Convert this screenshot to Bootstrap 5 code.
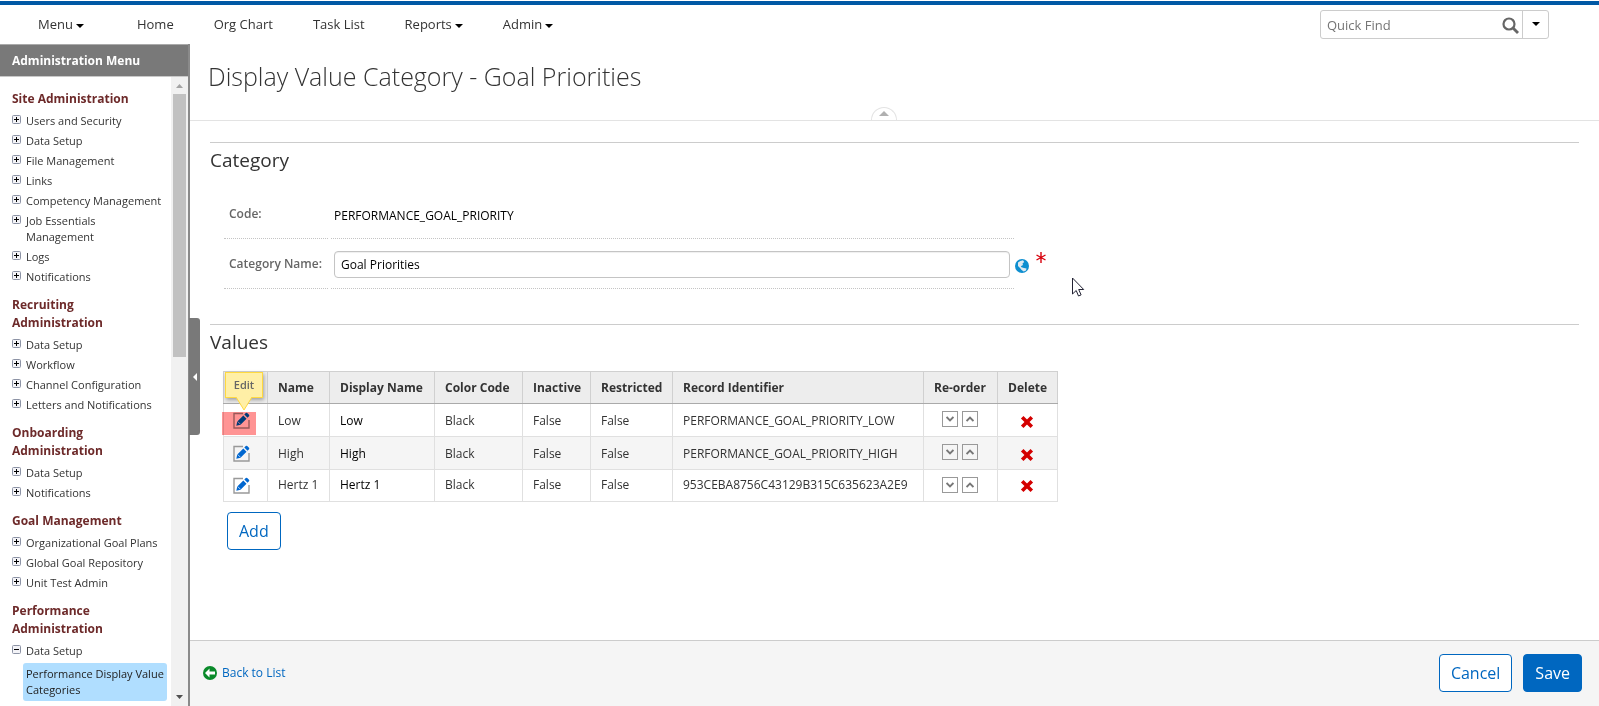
<!DOCTYPE html>
<html lang="en">
<head>
<meta charset="utf-8">
<meta name="viewport" content="width=device-width, initial-scale=1">
<title>Display Value Category - Goal Priorities</title>
<link href="https://cdn.jsdelivr.net/npm/bootstrap@5.3.0/dist/css/bootstrap.min.css" rel="stylesheet">
<style>
  body { font-family: "Open Sans", "Noto Sans", sans-serif; font-size: 12px; line-height: 16px; color: #333; background: #fff; }
  a { color: inherit; text-decoration: none; }
  .app { height: 100vh; }

  .topbar { height: 44px; padding: 5px 50px 0 38px; position: relative; }
  .topbar::before { content: ""; position: absolute; left: 0; right: 0; top: 1px; height: 4px; background: #0058a5; }
  .main-nav { gap: 40px; font-size: 13px; line-height: 18px; }
  .main-nav a:first-child { margin-right: 13px; }
  .main-nav a::after { color: #000; }
  .main-nav .dropdown-toggle::after { margin-left: 3px; border-width: 4px 4px 0; vertical-align: 1px; }
  .quick-find { width: 229px; height: 29px; border: 1px solid #ccc; border-radius: 3px; }
  .quick-find input { border: 0; padding: 2px 6px 0; font-size: 13px; outline: 0; min-width: 0; background: none; }
  .quick-find input::placeholder { color: #757575; opacity: 1; }
  .quick-find button { border: 0; background: none; padding: 0; }
  .quick-find .glass { margin-right: 3px; padding-top: 2px; }
  .quick-find .more { width: 26px; border-left: 1px solid #ccc; color: #000; padding-top: 2px; }
  .quick-find .more::after { margin: 0; border-width: 4px 4px 0; }

  .side { width: 190px; border-right: 2px solid #8a8a8a; position: relative; }
  .side-title { height: 33px; padding: 2px 0 0 12px; background: #797979; border-top: 1px solid #aaa; border-bottom: 1px solid #c8c8c8; color: #fff; font-size: 12px; font-weight: 700; margin: 0; }
  .side-list { padding: 13px 0 0 12px; overflow: hidden; font-size: 11px; }
  .side-list h2 { font-size: 12px; line-height: 18px; font-weight: 700; color: #6d2a2a; margin: 0 0 3px; }
  .side-list ul { margin: 0 0 9px; padding: 0; list-style: none; }
  .side-list li { padding: 2px 0; display: flex; gap: 5px; }
  .side-list li svg { flex: none; margin-top: 2px; }
  .side-list .current { margin: 2px 6px 0 11px; padding: 3px; border-radius: 3px; background: #b0deff; color: #222; }
  .scroller { width: 17px; flex: none; background: #f1f1f1; }
  .scroller .thumb { width: 13px; height: 263px; background: #c1c1c1; }
  .collapse-tab { position: absolute; left: 189px; top: 274px; width: 11px; height: 117px; padding: 0; border: 0; background: #797979; border-radius: 0 3px 3px 0; z-index: 2; }

  .page-head { height: 77px; border-bottom: 1px solid #e3e3e3; padding: 15px 0 0 18px; position: relative; }
  .page-head h1 { font-size: 25px; line-height: 34px; font-weight: 300; color: #333; margin: 0; }
  .fold { position: absolute; left: 50%; bottom: 0; margin-left: -24px; width: 26px; height: 13px; padding: 0; border: 1px solid #e3e3e3; border-bottom: 0; border-radius: 13px 13px 0 0; background: #fff; display: flex; justify-content: center; align-items: center; }

  .content { padding: 21px 20px 0; }
  .content section { border-top: 1px solid #ccc; padding-top: 5px; }
  .content section > h2 { font-size: 19px; line-height: 24px; font-weight: 400; margin: 0; }
  .details { width: 825px; margin: 22px 0 35px 14px; }
  .f-row { display: flex; gap: 3px; height: 50px; }
  .f-row > * { flex-shrink: 0; }
  .f-row:first-child { height: 45px; }
  .f-row:first-child > * { padding-top: 12px; }
  .f-row:first-child .f-value { padding-top: 14px; }
  .f-label { width: 104px; padding: 17px 0 0 5px; font-weight: 600; color: #666; border-bottom: 1px dotted #c4c4c4; }
  .f-value { width: 683px; border-bottom: 1px dotted #c4c4c4; padding: 0 0 0 3px; color: #000; }
  .f-field { padding: 12px 4px 0 3px; }
  .f-field input { width: 100%; height: 27px; border: 1px solid #c4c4c4; border-radius: 4px; padding: 0 6px; box-shadow: inset 0 1px 1px #0001; outline: 0; color: #000; }
  .f-mark { display: flex; padding-top: 12px; margin-left: -2px; }
  .f-mark button { border: 0; background: none; padding: 0; height: 14px; margin-top: 8px; display: flex; }

  .values { width: 834px; table-layout: fixed; border-collapse: collapse; margin: 17px 0 10px 13px; }
  .values th, .values td { border: 1px solid #e0e0e0; padding: 2px 10px 0; height: 33px; white-space: nowrap; }
  .values tbody tr:last-child td { height: 32px; padding-top: 0; }
  .values thead th { background: #ededed; border-color: #d0d0d0; border-bottom-color: #aaa; height: 32px; font-weight: 700; }
  .values tbody tr:nth-child(2) { background: #f5f5f5; }
  .values td:nth-child(3) { color: #000; }
  .values td.order-cell { padding: 0 8px 2px; }
  .values td:last-child { padding: 2px 10px 0 8px; }
  .values button { border: 0; background: none; padding: 0; line-height: 0; }
  .values .order { border: 1px solid #999; width: 16px; height: 16px; margin-right: 1px; display: inline-flex; align-items: center; justify-content: center; }
  .values td:first-child { padding-left: 9px; }
  .edit-cell { position: relative; }
  .edit-glow { position: absolute; left: -2px; top: 8px; width: 34px; height: 23px; background: #ff9494; mix-blend-mode: multiply; pointer-events: none; }
  .edit-tip { position: absolute; left: 1px; top: -32px; width: 38px; height: 26px; background: #ffefa6; border: 1px solid #ffd940; box-shadow: 1px 2px 4px #0005; font-size: 11px; font-weight: 600; line-height: 24px; text-align: center; color: #666; }
  .edit-tip svg { position: absolute; left: 9px; top: 23px; }

  .btn-line, .btn-fill { font-size: 16px; line-height: 22px; padding: 7px 11px; border-radius: 4px; --bs-btn-border-color: #0067c0; }
  .btn-line { --bs-btn-color: #0067c0; --bs-btn-bg: #fff; }
  .btn-fill { --bs-btn-color: #fff; --bs-btn-bg: #0067c0; }
  .add-row { padding-left: 17px; }
  .foot { height: 66px; background: #f5f5f5; border-top: 1px solid #ccc; padding: 0 17px 2px 13px; }
  .foot a { color: #0067c0; gap: 5px; }
  .foot-actions { gap: 11px; }
  .pointer { position: absolute; left: 1071px; top: 277px; pointer-events: none; }
</style>
</head>
<body>
<svg width="0" height="0" class="position-absolute" aria-hidden="true">
  <defs>
    <symbol id="plus" viewBox="0 0 9 9"><rect x=".5" y=".5" width="8" height="8" rx="1" fill="#f3f3f7" stroke="#8c93a5"/><path d="M2 4.500h5M4.500 2v5" stroke="#000"/></symbol>
    <symbol id="minus" viewBox="0 0 9 9"><rect x=".5" y=".5" width="8" height="8" rx="1" fill="#f3f3f7" stroke="#8c93a5"/><path d="M2 4.500h5" stroke="#000"/></symbol>
    <symbol id="edit" viewBox="0 0 17 17"><path d="M10 1.500H1v14.500h15V8" fill="none" stroke="#999" stroke-width="1.400"/><path d="M3.300 13.700l1-4.200 6-6 3.200 3.200-6 6zM11.300 2.500L12.800 1q.7-.6 1.400 0L16 2.800q.6.700 0 1.400l-1.500 1.500z" fill="#0067d0"/><path d="M4.800 9.600l2.600 2.600" stroke="#fff" stroke-width=".7"/></symbol>
    <symbol id="cross" viewBox="0 0 14 14"><path d="M2.200 2.200l9.600 9.600M11.800 2.200l-9.600 9.600" stroke="#d40000" stroke-width="3.600"/></symbol>
    <symbol id="down" viewBox="0 0 8 6"><path d="M.6 1L4 4.400 7.400 1" fill="none" stroke="#777" stroke-width="1.800"/></symbol>
    <symbol id="up" viewBox="0 0 8 6"><path d="M.6 5L4 1.600 7.400 5" fill="none" stroke="#777" stroke-width="1.800"/></symbol>
  </defs>
</svg>

<div class="app d-flex flex-column">
  <header class="topbar d-flex align-items-center justify-content-between">
    <nav class="main-nav d-flex" aria-label="Main">
      <a href="#" class="dropdown-toggle">Menu</a>
      <a href="#">Home</a>
      <a href="#">Org Chart</a>
      <a href="#">Task List</a>
      <a href="#" class="dropdown-toggle">Reports</a>
      <a href="#" class="dropdown-toggle">Admin</a>
    </nav>
    <form class="quick-find d-flex" role="search">
      <input type="text" class="flex-grow-1" placeholder="Quick Find" aria-label="Quick Find">
      <button type="button" class="glass" aria-label="Search"><svg width="17" height="17" viewBox="0 0 17 17" fill="none" stroke="#666"><circle cx="7" cy="7" r="5.500" stroke-width="2.200"/><path d="M11 11l5 5" stroke-width="2.800"/></svg></button>
      <button type="button" class="more dropdown-toggle" aria-label="Search options"></button>
    </form>
  </header>

  <div class="d-flex flex-grow-1 overflow-hidden">
    <aside class="side d-flex flex-column flex-shrink-0">
      <h2 class="side-title d-flex align-items-center flex-shrink-0">Administration Menu</h2>
      <div class="d-flex flex-grow-1 overflow-hidden">
        <nav class="side-list flex-grow-1" aria-label="Administration">
          <h2>Site Administration</h2>
          <ul>
            <li><svg width="9" height="9"><use href="#plus"/></svg><a href="#">Users and Security</a></li>
            <li><svg width="9" height="9"><use href="#plus"/></svg><a href="#">Data Setup</a></li>
            <li><svg width="9" height="9"><use href="#plus"/></svg><a href="#">File Management</a></li>
            <li><svg width="9" height="9"><use href="#plus"/></svg><a href="#">Links</a></li>
            <li><svg width="9" height="9"><use href="#plus"/></svg><a href="#">Competency Management</a></li>
            <li><svg width="9" height="9"><use href="#plus"/></svg><a href="#">Job Essentials<br>Management</a></li>
            <li><svg width="9" height="9"><use href="#plus"/></svg><a href="#">Logs</a></li>
            <li><svg width="9" height="9"><use href="#plus"/></svg><a href="#">Notifications</a></li>
          </ul>
          <h2>Recruiting<br>Administration</h2>
          <ul>
            <li><svg width="9" height="9"><use href="#plus"/></svg><a href="#">Data Setup</a></li>
            <li><svg width="9" height="9"><use href="#plus"/></svg><a href="#">Workflow</a></li>
            <li><svg width="9" height="9"><use href="#plus"/></svg><a href="#">Channel Configuration</a></li>
            <li><svg width="9" height="9"><use href="#plus"/></svg><a href="#">Letters and Notifications</a></li>
          </ul>
          <h2>Onboarding<br>Administration</h2>
          <ul>
            <li><svg width="9" height="9"><use href="#plus"/></svg><a href="#">Data Setup</a></li>
            <li><svg width="9" height="9"><use href="#plus"/></svg><a href="#">Notifications</a></li>
          </ul>
          <h2>Goal Management</h2>
          <ul>
            <li><svg width="9" height="9"><use href="#plus"/></svg><a href="#">Organizational Goal Plans</a></li>
            <li><svg width="9" height="9"><use href="#plus"/></svg><a href="#">Global Goal Repository</a></li>
            <li><svg width="9" height="9"><use href="#plus"/></svg><a href="#">Unit Test Admin</a></li>
          </ul>
          <h2>Performance<br>Administration</h2>
          <ul>
            <li><svg width="9" height="9"><use href="#minus"/></svg><a href="#">Data Setup</a></li>
            <li class="p-0"><a href="#" class="current text-nowrap">Performance Display Value<br>Categories</a></li>
          </ul>
        </nav>
        <div class="scroller d-flex flex-column align-items-center" aria-hidden="true">
          <svg width="17" height="17" class="flex-shrink-0"><path d="M5 11l3.500-4 3.500 4z" fill="#a3a3a3"/></svg>
          <div class="thumb"></div>
          <svg width="17" height="17" class="mt-auto flex-shrink-0"><path d="M5 6h7l-3.500 4z" fill="#505050"/></svg>
        </div>
      </div>
      <button type="button" class="collapse-tab" aria-label="Collapse menu"><svg width="6" height="8" viewBox="0 0 6 8"><path d="M5 0v8L1 4z" fill="#fff"/></svg></button>
    </aside>

    <div class="d-flex flex-column flex-grow-1 overflow-hidden">
      <div class="page-head flex-shrink-0">
        <h1>Display Value Category - Goal Priorities</h1>
        <button type="button" class="fold" aria-label="Fold header"><svg width="10" height="5"><path d="M0 5l5-5 5 5z" fill="#b0b0b0"/></svg></button>
      </div>

      <main class="content flex-grow-1 overflow-hidden">
        <section>
          <h2>Category</h2>
          <div class="details">
            <div class="f-row">
              <div class="f-label">Code:</div>
              <div class="f-value">PERFORMANCE_GOAL_PRIORITY</div>
            </div>
            <div class="f-row">
              <label class="f-label text-nowrap" for="catName">Category Name:</label>
              <div class="f-value f-field"><input id="catName" type="text" value="Goal Priorities"></div>
              <div class="f-mark">
                <button type="button" class="me-1" aria-label="Translate"><svg width="14" height="14" viewBox="0 0 14 14"><circle cx="7" cy="7" r="7" fill="#0e8fd0"/><path d="M3 3.500Q5 1.500 8 1.300L9.200 3 7.500 4.500 8 6 5.800 7.200 6.500 8.200 9 9l2.500.500-.5 2-2.300 1L6.600 11 5 9 3 7z" fill="#dfe9f0"/></svg></button>
                <svg width="18" height="14" viewBox="0 0 18 14" role="img" aria-label="Required"><path d="M8 1v11M3.500 4l9 5M3.500 9l9-5" stroke="#d8000c" stroke-width="1.400"/></svg>
              </div>
            </div>
          </div>
        </section>

        <section>
          <h2>Values</h2>
          <table class="values">
            <colgroup><col style="width:44px"><col style="width:62px"><col style="width:105px"><col style="width:88px"><col style="width:68px"><col style="width:82px"><col style="width:251px"><col style="width:74px"><col style="width:60px"></colgroup>
            <thead>
              <tr><th aria-label="Edit"></th><th>Name</th><th>Display Name</th><th>Color Code</th><th>Inactive</th><th>Restricted</th><th>Record Identifier</th><th>Re-order</th><th>Delete</th></tr>
            </thead>
            <tbody>
              <tr>
                <td class="edit-cell"><button type="button" aria-label="Edit Low"><svg width="17" height="17"><use href="#edit"/></svg></button><span class="edit-glow"></span><span class="edit-tip">Edit<svg width="18" height="15"><path d="M1 1l8 13 8-13" fill="#ffefa6" stroke="#ffd940"/><path d="M1 0h16v1H1z" fill="#ffefa6"/></svg></span></td>
                <td>Low</td><td>Low</td><td>Black</td><td>False</td><td>False</td><td>PERFORMANCE_GOAL_PRIORITY_LOW</td>
                <td class="order-cell text-center"><button type="button" class="order" aria-label="Move down"><svg width="8" height="6"><use href="#down"/></svg></button> <button type="button" class="order" aria-label="Move up"><svg width="8" height="6"><use href="#up"/></svg></button></td>
                <td class="text-center"><button type="button" aria-label="Delete Low"><svg width="14" height="14"><use href="#cross"/></svg></button></td>
              </tr>
              <tr>
                <td><button type="button" aria-label="Edit High"><svg width="17" height="17"><use href="#edit"/></svg></button></td>
                <td>High</td><td>High</td><td>Black</td><td>False</td><td>False</td><td>PERFORMANCE_GOAL_PRIORITY_HIGH</td>
                <td class="order-cell text-center"><button type="button" class="order" aria-label="Move down"><svg width="8" height="6"><use href="#down"/></svg></button> <button type="button" class="order" aria-label="Move up"><svg width="8" height="6"><use href="#up"/></svg></button></td>
                <td class="text-center"><button type="button" aria-label="Delete High"><svg width="14" height="14"><use href="#cross"/></svg></button></td>
              </tr>
              <tr>
                <td><button type="button" aria-label="Edit Hertz 1"><svg width="17" height="17"><use href="#edit"/></svg></button></td>
                <td>Hertz 1</td><td>Hertz 1</td><td>Black</td><td>False</td><td>False</td><td>953CEBA8756C43129B315C635623A2E9</td>
                <td class="order-cell text-center"><button type="button" class="order" aria-label="Move down"><svg width="8" height="6"><use href="#down"/></svg></button> <button type="button" class="order" aria-label="Move up"><svg width="8" height="6"><use href="#up"/></svg></button></td>
                <td class="text-center"><button type="button" aria-label="Delete Hertz 1"><svg width="14" height="14"><use href="#cross"/></svg></button></td>
              </tr>
            </tbody>
          </table>
          <div class="add-row"><button type="button" class="btn btn-line">Add</button></div>
        </section>
      </main>

      <footer class="foot d-flex align-items-center justify-content-between flex-shrink-0">
        <a href="#" class="d-flex align-items-center"><svg width="14" height="14" viewBox="0 0 14 14"><circle cx="7" cy="7" r="7" fill="#0a8a2a"/><path d="M2 7l4.500-4.500v3H12v3H6.500v3z" fill="#fff"/></svg>Back to List</a>
        <div class="foot-actions d-flex">
          <button type="button" class="btn btn-line">Cancel</button>
          <button type="button" class="btn btn-fill">Save</button>
        </div>
      </footer>
    </div>
  </div>
</div>
<svg class="pointer" width="14" height="21" viewBox="0 0 14 21" aria-hidden="true"><path d="M1.500 1v16l3.700-3.500L7.500 19l2.600-1.100-2.400-5.400h5z" fill="#fff" stroke="#223"/></svg>
<script src="https://cdn.jsdelivr.net/npm/bootstrap@5.3.0/dist/js/bootstrap.bundle.min.js"></script>
</body>
</html>
